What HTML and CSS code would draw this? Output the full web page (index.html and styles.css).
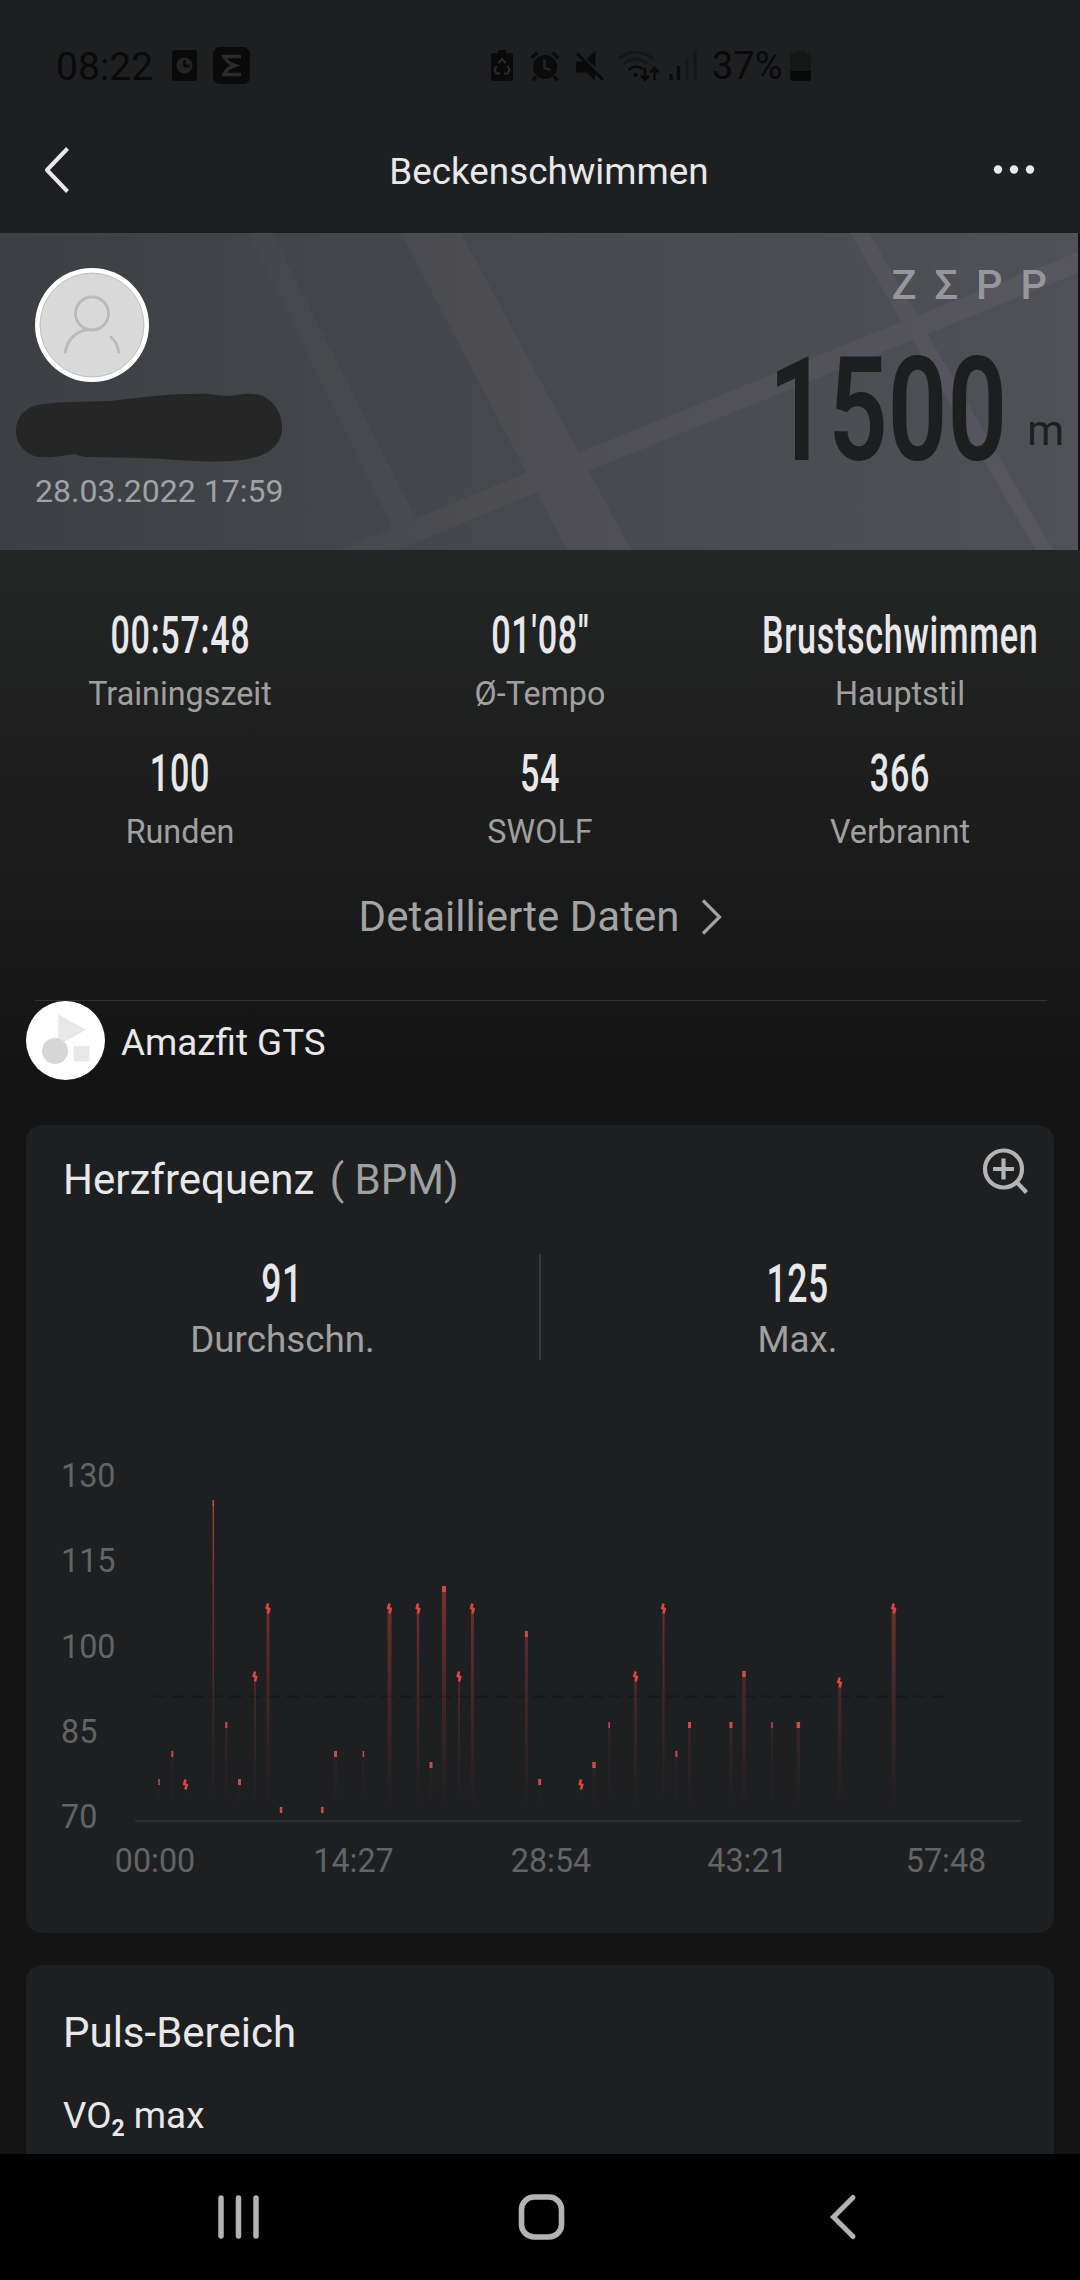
FILE: index.html
```html
<!DOCTYPE html>
<html lang="de">
<head>
    <meta charset="UTF-8">
    <title>Beckenschwimmen</title>

    <link rel="stylesheet" href="styles.css">

</head>
<body>

<div class="status">
    <span class="time">08:22</span>
    <svg class="ic-phone" width="25" height="31" viewBox="0 0 25 31">
        <rect width="25" height="31" rx="3" fill="#0a0a0a"/>
        <circle cx="12.5" cy="15.5" r="8" fill="#242424"/>
        <path d="M12.5 10v6h5" fill="none" stroke="#0a0a0a" stroke-width="2.4"/>
    </svg>
    <svg class="ic-zepp" width="37" height="37" viewBox="0 0 37 37">
        <rect width="37" height="37" rx="7" fill="#0a0a0a"/>
        <path d="M28 9.500H11C14 15 17 17 22 18.500C17 20 13 22 11 27.500H28" fill="none" stroke="#2a2b2c" stroke-width="3.400"/>
    </svg>
    <div class="status-right">
        <svg class="ic-saver" width="22" height="31" viewBox="0 0 22 31">
            <path d="M7 0h8v3h4a3 3 0 0 1 3 3v22a3 3 0 0 1-3 3H3a3 3 0 0 1-3-3V6a3 3 0 0 1 3-3h4z" fill="#0a0a0a"/>
            <path d="M7.500 13l3.500-4 3.500 4M5.500 16l-2 4 2 3.500h3.500M16.500 16l2 4-2 3.500H13" fill="none" stroke="#2a2b2c" stroke-width="2"/>
        </svg>
        <svg class="ic-alarm" width="30" height="30" viewBox="0 0 30 30">
            <circle cx="15" cy="16" r="12" fill="#0b0b0b"/>
            <path d="M1.500 7l6-5.500M28.500 7l-6-5.500M6 25l-3 4.500M24 25l3 4.500" stroke="#0b0b0b" stroke-width="3.500"/>
            <path d="M14.500 8.500v8.500l6 2" fill="none" stroke="#242526" stroke-width="2.400"/>
        </svg>
        <svg class="ic-mute" width="30" height="30" viewBox="0 0 30 30">
            <path d="M1 10.500h7l12 12V30l-8.500-8.500H1zM11.500 8l9-8v16z" fill="#0a0a0a"/>
            <path d="M2 2.500l26 26.500" stroke="#0a0a0a" stroke-width="2.800"/>
        </svg>
        <svg class="ic-wifi" width="42" height="31" viewBox="0 0 42 31">
            <g fill="none" stroke="#151617" stroke-width="2.600">
                <path d="M1 9Q17.500-5 35 9"/>
                <path d="M6 14Q17.500 4 29.500 14"/>
            </g>
            <path d="M10.500 20Q17.500 13.500 25 19" fill="none" stroke="#0a0a0a" stroke-width="2.600"/>
            <circle cx="17.500" cy="25" r="2.200" fill="#0a0a0a"/>
            <path d="M27 18v11M23 25.500l4 4.500 4-4.500M36.500 30V19M32.500 22.500l4-4.500 4 4.500" fill="none" stroke="#0a0a0a" stroke-width="2.500"/>
        </svg>
        <svg class="ic-signal" width="29" height="30" viewBox="0 0 29 30">
            <path d="M2 23v6M9.500 15v14" stroke="#0a0a0a" stroke-width="3.400"/>
            <path d="M18 8v21M26 0v29" stroke="#161718" stroke-width="3"/>
        </svg>
        <span class="percent">37%</span>
        <svg width="21" height="31" viewBox="0 0 21 31">
            <path d="M6 0h9v3h3a3 3 0 0 1 3 3v15H0V6a3 3 0 0 1 3-3h3z" fill="#161817"/>
            <path d="M0 21h21v7a3 3 0 0 1-3 3H3a3 3 0 0 1-3-3z" fill="#080909"/>
        </svg>
    </div>
</div>

<div class="header">
    <svg width="28" height="50" viewBox="0 0 28 50">
        <path d="M24.500 3.500L4 25L24.500 46.500" fill="none" stroke="#e8e8ea" stroke-width="4" stroke-linejoin="round"/>
    </svg>
    <h1>Beckenschwimmen</h1>
    <svg width="42" height="50" viewBox="0 0 42 50" fill="#e8e8ea">
        <circle cx="5" cy="24.500" r="4.200"/>
        <circle cx="21" cy="24.500" r="4.200"/>
        <circle cx="37" cy="24.500" r="4.200"/>
    </svg>
</div>

<div class="banner">
    <svg class="map" width="1078" height="317" viewBox="0 0 1078 317">
        <defs>
            <linearGradient id="road" gradientUnits="userSpaceOnUse" x1="250" y1="0" x2="1000" y2="0">
                <stop offset="0" stop-color="#44474b"/>
                <stop offset=".3" stop-color="#4c4c51"/>
                <stop offset="1" stop-color="#57555e"/>
            </linearGradient>
        </defs>
        <g fill="url(#road)">
            <path d="M248 0H272L415 284L393 295Z"/>
            <path d="M401 0H461L631 317H567Z"/>
            <path d="M339 317L529 239L580 219L919 82L1078 19V40L912 107L588 238L398 317Z"/>
            <path d="M850 0H869L1053 317H1036Z"/>
        </g>
    </svg>
    <div class="user">
        <svg class="avatar" width="114" height="114" viewBox="0 0 114 114">
            <circle cx="57" cy="57" r="57" fill="#fff"/>
            <circle cx="57" cy="57" r="52" fill="#d9d9d9" stroke="#b5b5b5" stroke-width=".8"/>
            <g fill="none" stroke="#bbb" stroke-width="3" stroke-linecap="round">
                <circle cx="57" cy="45.500" r="16.500"/>
                <path d="M30.500 84C32 71 42 62 55 61.500M76 69C80.500 73 83 78 83.500 84"/>
            </g>
        </svg>
        <svg class="scribble" width="266" height="69" viewBox="0 0 266 69">
            <path d="M22 12C45 8 70 9 94 8C130 4 150 1 177 1C195 0 203 3 211 3C221 3 227 0 238 1C253 2 266 16 266 34C266 50 255 60 240 64C218 70 190 69 160 67C125 64 95 65 70 64C64 63 62 62 59 61C48 62 38 65 24 64C10 63 0 51 0 38C0 24 10 14 22 12Z" fill="#262626"/>
        </svg>
        <div class="date">28.03.2022 17:59</div>
    </div>
    <div class="distance">
        <div class="brand">ZΣPP</div>
        <div class="meters"><b>1500</b><span>m</span></div>
    </div>
</div>

<div class="summary">
    <div class="stats">
        <div class="stat">
            <span class="value">00:57:48</span>
            <span class="label">Trainingszeit</span>
        </div>
        <div class="stat">
            <span class="value">01'08''</span>
            <span class="label">Ø-Tempo</span>
        </div>
        <div class="stat">
            <span class="value">Brustschwimmen</span>
            <span class="label">Hauptstil</span>
        </div>
        <div class="stat">
            <span class="value">100</span>
            <span class="label">Runden</span>
        </div>
        <div class="stat">
            <span class="value">54</span>
            <span class="label">SWOLF</span>
        </div>
        <div class="stat">
            <span class="value">366</span>
            <span class="label">Verbrannt</span>
        </div>
    </div>
    <div class="details">
        <span>Detaillierte Daten</span>
        <svg width="22" height="38" viewBox="0 0 22 38">
            <path d="M2 2.500L18.500 19L2 35.500" fill="none" stroke="#a3a3a3" stroke-width="3.200"/>
        </svg>
    </div>
    <div class="device">
        <svg width="79" height="79" viewBox="0 0 79 79">
            <circle cx="39.500" cy="39.500" r="39.500" fill="#fff"/>
            <path d="M32 13L60 29L32 44Z" fill="#e8e8e8"/>
            <circle cx="29" cy="50" r="13" fill="#d6d6d6"/>
            <rect x="47.500" y="45" width="16" height="15.500" fill="#e8e8e8"/>
        </svg>
        <span>Amazfit GTS</span>
    </div>
</div>

<div class="card">
    <div class="card-head">
        <h2>Herzfrequenz <span>( BPM)</span></h2>
        <svg width="48" height="48" viewBox="0 0 48 48" fill="none" stroke="#b4b4b4">
            <circle cx="22.500" cy="22" r="18.500" stroke-width="4.200"/>
            <path d="M22.500 11.500v21M12 22h21" stroke-width="4.200"/>
            <path d="M35.500 35l10 10.500" stroke-width="4.200"/>
        </svg>
    </div>
    <div class="pulse">
        <div class="stat">
            <span class="value">91</span>
            <span class="label">Durchschn.</span>
        </div>
        <div class="stat">
            <span class="value">125</span>
            <span class="label">Max.</span>
        </div>
    </div>
    <svg class="chart" width="1028" height="460" viewBox="0 0 1028 460">
        <defs>
            <linearGradient id="fade" gradientUnits="userSpaceOnUse" x1="0" y1="60" x2="0" y2="370">
                <stop offset="0" stop-color="#c9493f" stop-opacity=".75"/>
                <stop offset=".35" stop-color="#b8403c" stop-opacity=".5"/>
                <stop offset="1" stop-color="#8a3535" stop-opacity="0"/>
            </linearGradient>
        </defs>
        <g class="scale">
            <text x="35" y="47">130</text>
            <text x="35" y="132">115</text>
            <text x="35" y="218">100</text>
            <text x="35" y="303">85</text>
            <text x="35" y="388">70</text>
        </g>
        <path d="M127 256.500H919" stroke="#17181a" stroke-width="2" stroke-dasharray="13 6"/>
        <path d="M109 381H995" stroke="#343638" stroke-width="1.600"/>
        <g id="spikes"></g>
        <g class="scale times">
            <text x="129" y="432">00:00</text>
            <text x="327.500" y="432">14:27</text>
            <text x="525" y="432">28:54</text>
            <text x="721.500" y="432">43:21</text>
            <text x="920" y="432">57:48</text>
        </g>
    </svg>
</div>

<div class="card zones">
    <h2>Puls-Bereich</h2>
    <p>VO<span class="low">2</span> max</p>
</div>

<div class="nav">
    <svg width="44" height="48" viewBox="0 0 44 48">
        <path d="M5 5v38M22.500 5v38M40 5v38" stroke="#b3b3b3" stroke-width="5.500" stroke-linecap="round"/>
    </svg>
    <svg class="home" width="48" height="48" viewBox="0 0 48 48">
        <rect x="4.500" y="4" width="40" height="40" rx="12.500" fill="none" stroke="#b3b3b3" stroke-width="5.600"/>
    </svg>
    <svg width="30" height="48" viewBox="0 0 30 48">
        <path d="M25 4.500L5.500 24L25 43.500" fill="none" stroke="#b3b3b3" stroke-width="5" stroke-linecap="round"/>
    </svg>
</div>

<script>
    // x, y of the peak, line width, 1 = jagged peak
    var spikes = [
        [133, 339, 1.5, 0], [146.3, 311, 2, 0], [159.5, 339, 1, 1], [187.3, 60, 1.5, 0],
        [200.3, 282, 2, 0], [213.5, 339, 3, 0], [229, 231, 2, 1], [242, 163, 3, 1],
        [255, 367, 2.5, 0], [296.3, 367, 2.5, 0], [309.5, 311, 3, 0], [337.4, 311, 1.5, 0],
        [363.5, 163, 4, 1], [392, 163, 2.5, 1], [405, 322, 3, 0], [418, 146, 4, 0],
        [433, 231, 2, 1], [446.4, 163, 3, 1], [500.4, 191, 3, 0], [513.7, 339, 3, 0],
        [555, 339, 1, 1], [568, 322, 3.5, 0], [583.2, 282, 1.5, 0], [609.6, 231, 3, 1],
        [637.5, 163, 2, 1], [650.4, 311, 2, 0], [663.5, 282, 3, 0], [705, 282, 3, 0],
        [718, 231, 3.5, 0], [746, 282, 1.5, 0], [772.3, 282, 3.5, 0], [813.6, 237, 3.5, 1],
        [867.7, 163, 4, 1]
    ];
    var html = "";

    for (var i = 0; i < spikes.length; i++) {
        var x = spikes[i][0], y = spikes[i][1], w = spikes[i][2];
        if (y < 360) {
            html += '<rect class="tail" x="' + (x - w / 2) + '" y="' + (y + 4) + '" width="' + w + '" height="' + (366 - y) + '"/>';
        }
        if (spikes[i][3]) {
            html += '<path class="peak" d="M' + x + ' ' + (y + .5) + 'l-1.200 4.500 2.400 1-1.200 4.500"/>';
        } else {
            html += '<rect class="dot" x="' + (x - w / 2) + '" y="' + y + '" width="' + w + '" height="6"/>';
        }
    }
    document.getElementById("spikes").innerHTML = html;
</script>

</body>
</html>
```
FILE: styles.css
```css
* {
    box-sizing: border-box;
}

body {
    margin: 0;
    width: 1080px;
    height: 2280px;
    overflow: hidden;
    background-color: #141414;
    color: #e8e8ea;
    font-family: Roboto, "Liberation Sans", sans-serif;
}

svg {
    display: block;
    flex: none;
}

h1, h2, p {
    margin: 0;
    font-weight: 400;
}

.status {
    display: flex;
    align-items: center;
    height: 115px;
    padding: 16px 269px 0 56px;
    background-color: #1e1f21;
    color: #0a0a0a;
}

.time {
    width: 116px;
    padding-top: 3px;
    font-size: 39px;
    line-height: 44px;
}

.ic-zepp {
    margin-left: 16px;
}

.status-right {
    display: flex;
    align-items: center;
    margin-left: auto;
}

.ic-saver {
    margin-right: 17px;
}

.ic-alarm {
    margin-right: 15px;
}

.ic-mute {
    margin-right: 13px;
}

.ic-wifi {
    margin-right: 9px;
}

.percent {
    width: 78px;
    margin-left: 14px;
    font-size: 38px;
    line-height: 44px;
}

.header {
    display: flex;
    align-items: center;
    justify-content: space-between;
    height: 118px;
    padding: 0 45px 8px 43px;
    background-color: #1e1f21;
}

.header h1 {
    padding: 3px 0 0 34px;
    margin-right: 0;
    font-size: 36.8px;
    line-height: 50px;
}

.banner {
    display: flex;
    justify-content: space-between;
    position: relative;
    width: 1078px;
    height: 317px;
    background: linear-gradient(to right, #3c3f44, #45484c 45%, #4f5156);
}

.map {
    position: absolute;
    left: 0;
    top: 0;
}

.user, .distance {
    position: relative;
}

.user {
    padding: 35px 0 0 16px;
}

.avatar {
    margin-left: 19px;
}

.scribble {
    margin-top: 11px;
}

.date {
    margin: 9px 0 0 19px;
    font-size: 32px;
    line-height: 40px;
    color: #a0a2a5;
}

.distance {
    padding: 28px 14px 0 0;
}

.brand {
    margin-right: -1px;
    font-size: 41.5px;
    font-weight: 500;
    line-height: 48px;
    letter-spacing: 18px;
    text-align: right;
    color: #95979b;
}

.meters {
    display: flex;
    justify-content: flex-end;
    margin-top: 27px;
    color: #1c1e20;
}

.meters b {
    font-size: 144px;
    font-weight: 600;
    line-height: 150px;
    transform: scaleX(.725);
    transform-origin: right;
}

.meters span {
    margin-left: 20px;
    padding-top: 70px;
    font-size: 42px;
    line-height: 50px;
}

.summary {
    padding-top: 56px;
    background: linear-gradient(#242525, #141414 530px);
}

.stats {
    display: grid;
    grid-template-columns: repeat(3, 360px);
    row-gap: 30px;
}

.stat {
    display: flex;
    flex-direction: column;
    align-items: center;
}

.value {
    font-size: 51px;
    font-weight: 500;
    line-height: 60px;
    letter-spacing: 1px;
    white-space: nowrap;
    transform: scaleX(.67);
}

.label {
    margin-top: 8px;
    font-size: 32.3px;
    line-height: 40px;
    color: #a0a0a0;
}

.details {
    display: flex;
    align-items: center;
    justify-content: center;
    margin-top: 35px;
    padding-left: 2px;
    font-size: 42px;
    line-height: 60px;
    color: #a3a3a3;
}

.details svg {
    margin-left: 22px;
}

.device {
    display: flex;
    align-items: center;
    position: relative;
    margin: 54px 33px 0 26px;
    padding-bottom: 45px;
    font-size: 36.8px;
}

/* hairline over the device row */
.device::before {
    content: "";
    position: absolute;
    left: 9px;
    right: 0;
    top: -1px;
    height: 1px;
    background-color: #303030;
}

.device span {
    margin: 4px 0 0 16px;
}

.card {
    width: 1028px;
    height: 808px;
    margin: 0 auto;
    padding-top: 25px;
    border-radius: 16px;
    background-color: #1e1f21;
}

.card-head {
    display: flex;
    justify-content: space-between;
    padding: 0 25px 0 37px;
}

.card h2 {
    font-size: 42px;
    line-height: 60px;
}

.card h2 span {
    margin-left: 5px;
    color: #a0a0a0;
}

.card-head svg {
    margin-top: -3px;
}

.pulse {
    display: grid;
    grid-template-columns: 513px 515px;
    margin-top: 44px;
}

.pulse .stat + .stat {
    border-left: 2px solid #36383a;
}

.pulse .value {
    font-size: 53px;
}

.pulse .label {
    margin-top: 6px;
    font-size: 36.8px;
}

.chart {
    margin-top: 80px;
}

.scale {
    font-size: 32.3px;
    fill: #626466;
}

.times {
    text-anchor: middle;
}

.tail {
    fill: url(#fade);
}

.dot {
    fill: #c94c4c;
}

.peak {
    fill: none;
    stroke: #e0453f;
    stroke-width: 2.6;
}

.zones {
    height: 189px;
    margin-top: 32px;
    padding: 38px 37px 0;
    border-radius: 16px 16px 0 0;
}

.zones p {
    margin-top: 28px;
    font-size: 36.8px;
    line-height: 50px;
}

.low {
    position: relative;
    top: 8px;
    font-size: 23px;
    font-weight: 700;
}

.nav {
    display: flex;
    align-items: center;
    justify-content: space-between;
    height: 126px;
    padding: 0 222px 0 216px;
    background-color: #000;
}

.home {
    margin-right: 7px;
}
```
